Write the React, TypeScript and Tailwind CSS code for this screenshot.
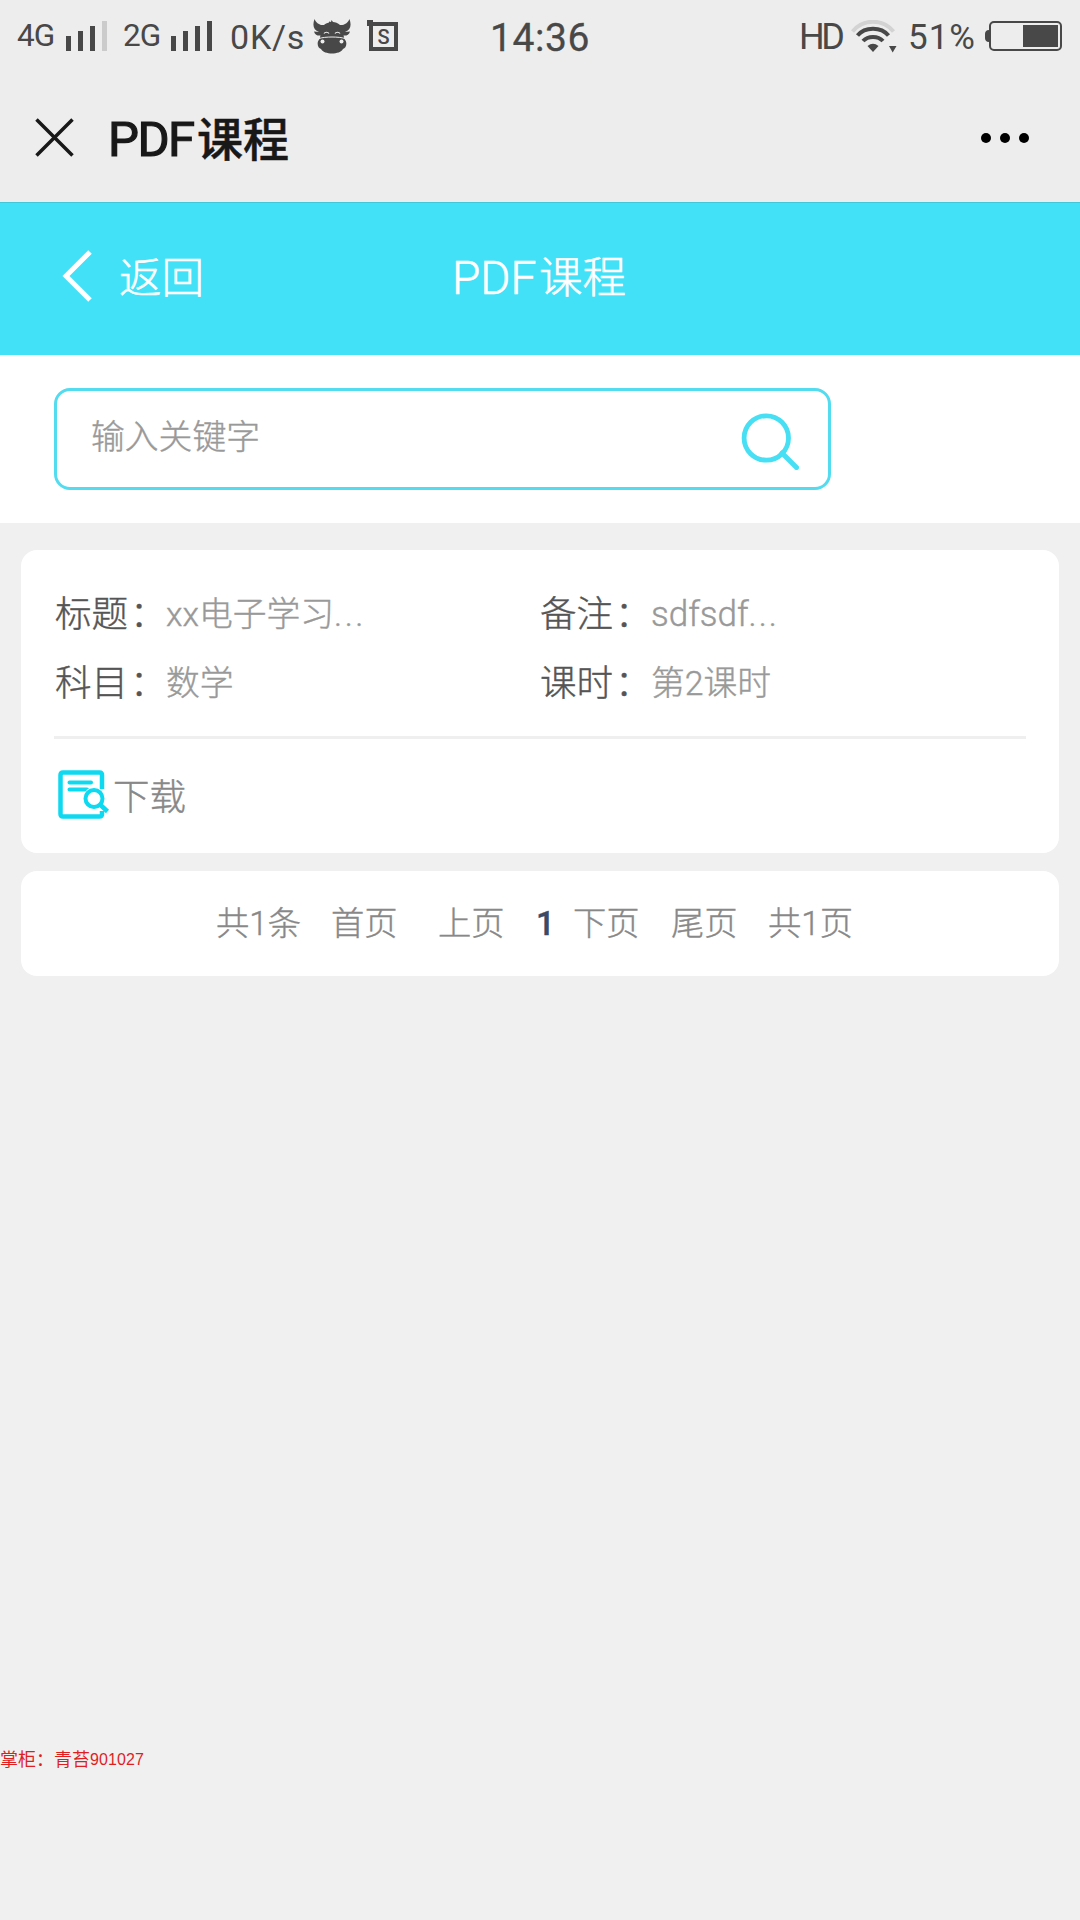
import type { ReactNode } from "react";

type FieldProps = {
  label: string;
  children: ReactNode;
};

const pagerItems = [
  { label: "共1条", className: "w-[115px]" },
  { label: "首页", className: "w-[107px]" },
  { label: "上页", className: "w-[98px]" },
  { label: "1", className: "w-[37px] font-medium text-[#3c4a66]" },
  { label: "下页", className: "w-[98px]" },
  { label: "尾页", className: "w-[97px]" },
  { label: "共1页", className: "w-[90px]" }
];

function SignalBars({ weak = false }: { weak?: boolean }) {
  return (
    <svg width="42" height="30" viewBox="0 0 42 30" fill="#484848" aria-hidden="true">
      <rect x="0" y="15" width="5" height="15" />
      <rect x="12" y="10" width="5" height="20" />
      <rect x="24" y="5" width="5" height="25" />
      <rect x="36" y="0" width="5" height="30" fill={weak ? "#cbcbcb" : "#484848"} />
    </svg>
  );
}

function BullIcon() {
  return (
    <svg width="38" height="36" viewBox="0 0 38 36" aria-hidden="true">
      <path
        d="M1.500 0C-1 7 1 11 6 13L1 12.500C2 16 5 17 7.500 16.500C7 18 7 19 6.500 20C3 24 5 29 8 30C11 36 27 36 30 30C33 29 35 24 31.500 20C31 19 31 18 30.500 16.500C33 17 36 16 37 12.500L32 13C37 11 39 7 36.500 0C35 4 31 6.500 27 6C25 4 22 3 20 3L18.500 1L18 3L16 2.500V3.500C14 4 12 5 11 6C7 6.500 3 4 1.500 0Z"
        fill="#484848"
      />
      <path d="M6 19.500C12 17.500 26 17.500 32 19.500" fill="none" stroke="#ededed" strokeWidth="1" />
      <path d="M11 14.500C12 12.800 15 12.800 16 14.500M22 14.500C23 12.800 26 12.800 27 14.500" fill="none" stroke="#ededed" strokeWidth="1.200" />
      <circle cx="9.500" cy="22.500" r="2" fill="#ededed" />
      <circle cx="28.500" cy="22.500" r="2" fill="#ededed" />
    </svg>
  );
}

function WifiIcon() {
  return (
    <svg width="46" height="34" viewBox="0 0 46 34" fill="none" aria-hidden="true">
      <path d="M1.500 11.500C12 -1.500 32 -1.500 42.500 11.500" stroke="#d3d3d3" strokeWidth="4" />
      <path d="M6.500 15.500C14 6.500 30 6.500 37.500 15.500" stroke="#484848" strokeWidth="4" />
      <path d="M12 21C17 15.500 27 15.500 32 21" stroke="#484848" strokeWidth="4" />
      <path d="M16.500 26Q22 21.500 27.500 26L22 32Z" fill="#484848" />
      <path d="M38 26H45.500L41.700 32.500Z" fill="#484848" />
    </svg>
  );
}

function BatteryIcon() {
  return (
    <svg width="78" height="30" viewBox="0 0 78 30" aria-hidden="true">
      <path d="M4 9V21C1 21 0 19 0 17V13C0 11 1 9 4 9Z" fill="#484848" />
      <rect x="5" y="1" width="71" height="28" rx="4" fill="none" stroke="#484848" strokeWidth="2" />
      <rect x="38" y="4" width="35" height="22" fill="#484848" />
    </svg>
  );
}

function StatusBar() {
  return (
    <div className="flex h-[73px] items-start text-[#484848]">
      <span className="ml-[17px] mt-[18px] w-[49px] text-[31.5px] leading-9 tracking-[-1px]">4G</span>
      <div className="mt-[21px] w-[57px]">
        <SignalBars weak />
      </div>
      <span className="mt-[18px] w-12 text-[31.5px] leading-9 tracking-[-1px]">2G</span>
      <div className="mt-[21px] w-[59px]">
        <SignalBars />
      </div>
      <span className="mt-[17px] w-[83px] text-[34px] leading-10 tracking-[0.8px]">0K/s</span>
      <div className="mt-[19px] w-14">
        <BullIcon />
      </div>
      <div className="relative mt-[22px] flex size-[29px] items-center justify-center border-4 border-[#484848] text-[20px] font-medium leading-none">
        <span className="absolute -left-1.5 -top-1.5 h-1.5 w-1.5 bg-[#484848]" />
        S
      </div>
      <span className="ml-[92px] mt-[15px] w-[309px] text-[39px] leading-[46px] tracking-[0.6px] [-webkit-text-stroke:0.3px_#484848]">14:36</span>
      <span className="mt-4 w-[52px] text-[36px] leading-[42px] tracking-[-3.5px]">HD</span>
      <div className="mt-5 w-[57px]">
        <WifiIcon />
      </div>
      <span className="mt-[18px] w-[77px] text-[35px] leading-10 tracking-[1px]">51%</span>
      <div className="mt-[21px]">
        <BatteryIcon />
      </div>
    </div>
  );
}

function Field({ label, children }: FieldProps) {
  return (
    <div className="flex w-[485px] items-center leading-[69px]">
      <span className="w-[111px] shrink-0 whitespace-nowrap text-[36.5px] text-[#555]">
        {label}<span className="ml-0.5 inline-block">：</span>
      </span>
      <span className="text-[33.8px] text-[#999]">{children}</span>
    </div>
  );
}

export default function App() {
  return (
    <main className="flex h-[1920px] w-[1080px] flex-col overflow-hidden bg-[#f0f0f0] font-[Roboto,'Noto_Sans_CJK_SC',sans-serif]">
      <header className="h-[202px] bg-[#ededed]">
        <StatusBar />
        <div className="flex h-[129px] items-center">
          <svg className="ml-[35px]" width="39" height="39" viewBox="0 0 39 39" aria-hidden="true">
            <path d="M1.500 1.500L37.500 37.500M37.500 1.500L1.500 37.500" stroke="#181818" strokeWidth="3.500" />
          </svg>
          <h1 className="ml-[34px] flex items-center pt-1 text-[46px] font-medium leading-[60px] text-[#181818] [-webkit-text-stroke:0.5px_#181818]">
            <span className="w-[89px] text-[49px] font-normal tracking-[-1.5px] [-webkit-text-stroke:1.2px_#181818]">PDF</span>课程
          </h1>
          <svg className="ml-auto mr-[50px]" width="50" height="12" viewBox="0 0 50 12" aria-hidden="true">
            <circle cx="6" cy="6" r="5" />
            <circle cx="25" cy="6" r="5" />
            <circle cx="44" cy="6" r="5" />
          </svg>
        </div>
      </header>

      <nav className="flex h-[153px] items-center border-t border-[#3fc8d9] bg-[#42e1f7] font-light text-white [-webkit-text-stroke:0.6px_white]">
        <svg className="mb-1.5 ml-[62px]" width="30" height="52" viewBox="0 0 30 52" fill="none" aria-hidden="true">
          <path d="M28 2L4 26L28 50" stroke="white" strokeWidth="5" />
        </svg>
        <span className="ml-[27px] w-[333px] text-[42.500px] leading-[60px]">返回</span>
        <div className="flex items-center text-[43.5px] leading-[60px]">
          <span className="w-[87px] pb-0.5 text-[46px]">PDF</span>课程
        </div>
      </nav>

      <section className="h-[168px] bg-white pl-[54px] pt-[33px]">
        <div className="flex h-[102px] w-[777px] items-center justify-between rounded-2xl border-[3px] border-[#53dcef] pl-[34px] pr-[29px]">
          <span className="pb-0.5 text-[33.8px] font-light leading-[50px] text-[#999] [-webkit-text-stroke:0.4px_#999]">输入关键字</span>
          <svg className="mt-[3px]" width="58" height="58" viewBox="0 0 58 58" fill="none" stroke="#46dff4" aria-hidden="true">
            <circle cx="25.300" cy="26" r="22.200" strokeWidth="4.800" />
            <path d="M41 41L55.500 55.500" strokeWidth="5" strokeLinecap="round" />
          </svg>
        </div>
      </section>

      <section className="mx-[21px] mt-[27px] h-[303px] rounded-2xl bg-white px-[33px] pt-[30px] font-light [-webkit-text-stroke:0.4px_currentColor]">
        <div className="flex flex-wrap pl-px">
          <Field label="标题">
            xx电子学习<span className="tracking-[2.5px]">...</span>
          </Field>
          <Field label="备注">
            <span className="text-[35px]">sdfsdf</span>
            <span className="tracking-[2px]">...</span>
          </Field>
          <Field label="科目">数学</Field>
          <Field label="课时">第2课时</Field>
        </div>
        <div className="mt-[18px] h-[3px] bg-[#efefef]" />
        <div className="flex h-[112px] items-center pl-1">
          <svg width="52" height="50" viewBox="0 0 52 50" fill="none" stroke="#0dd9f1" aria-hidden="true">
            <path d="M44 19V5Q44 2.500 41.500 2.500H5Q2.500 2.500 2.500 5V44Q2.500 46.500 5 46.500H41.500Q44 46.500 44 44V41" strokeWidth="4.500" />
            <path d="M11.500 12.500H33M11.500 19.500H29" strokeWidth="4" strokeLinecap="round" />
            <circle cx="36" cy="28.500" r="11" fill="white" stroke="none" />
            <circle cx="36" cy="28.500" r="8.500" strokeWidth="4" />
            <path d="M42.500 35L49.500 41.500" strokeWidth="4.500" />
          </svg>
          <span className="ml-[3px] pt-[5px] text-[36.5px] leading-[54px] text-[#888]">下载</span>
        </div>
      </section>

      <section className="mx-[21px] mt-[18px] flex h-[105px] items-center rounded-2xl bg-white pl-[195px] pt-px text-[33.3px] font-light text-[#888] [-webkit-text-stroke:0.4px_currentColor]">
        {pagerItems.map((item) => (
          <span key={item.label} className={`shrink-0 whitespace-nowrap ${item.className}`}>
            {item.label}
          </span>
        ))}
      </section>

      <footer className="mt-[769px] flex items-center text-[18px] leading-[30px] text-[#df1f1f]">
        掌柜：青苔<span className="font-['Liberation_Sans'] text-[16px] tracking-[0.1px]">901027</span>
      </footer>
    </main>
  );
}
